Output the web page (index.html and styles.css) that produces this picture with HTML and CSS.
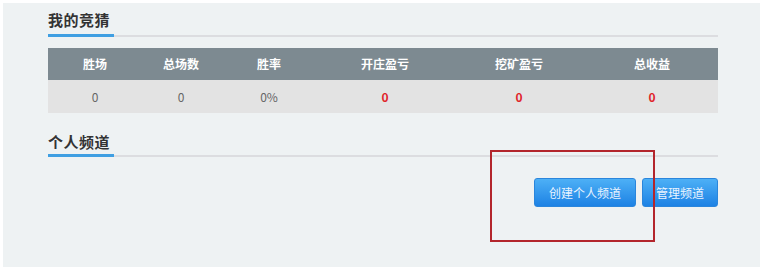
FILE: index.html
```html
<!DOCTYPE html>
<html lang="zh-CN">
<head>
<meta charset="utf-8">
<title>我的竞猜</title>
<link rel="stylesheet" href="styles.css">
</head>
<body>
<div class="panel">
  <div class="sec-head"><span class="sec-title">我的竞猜</span></div>
  <div class="stats">
    <div class="row head">
      <div>胜场</div><div>总场数</div><div>胜率</div><div>开庄盈亏</div><div>挖矿盈亏</div><div>总收益</div>
    </div>
    <div class="row body">
      <div>0</div><div>0</div><div>0%</div><div class="red">0</div><div class="red">0</div><div class="red">0</div>
    </div>
  </div>
  <div class="sec-head second"><span class="sec-title">个人频道</span></div>
  <div class="actions">
    <button class="btn wide">创建个人频道</button>
    <button class="btn">管理频道</button>
  </div>
  <div class="mark"></div>
</div>
</body>
</html>
```
FILE: styles.css
```css
html, body {
  margin: 0;
  padding: 0;
  background: #ffffff;
}
body {
  font-family: "Noto Sans CJK SC", "Noto Sans", sans-serif;
}
.panel {
  position: relative;
  margin: 3px;
  width: 757px;
  height: 264px;
  box-sizing: border-box;
  background: #eef2f3;
  padding: 4px 42px 0 45px;
}
.sec-head {
  border-bottom: 2px solid #dcdde0;
  height: 28px;
}
.sec-head.second {
  margin-top: 16px;
  height: 26px;
}
.sec-title {
  display: inline-block;
  width: 66px;
  height: 25px;
  border-bottom: 3px solid #3f9fe2;
  font-size: 15px;
  font-weight: bold;
  line-height: 22px;
  color: #333333;
  letter-spacing: 0.5px;
}
.second .sec-title {
  height: 23px;
}
.stats {
  margin-top: 11px;
}
.row {
  display: grid;
  grid-template-columns: 94px 78px 98px 134px 134px 132px;
  text-align: center;
  font-size: 12px;
}
.row.head {
  height: 32px;
  line-height: 32px;
  background: #7d8a91;
  color: #ffffff;
  font-weight: bold;
}
.row.body {
  height: 33px;
  line-height: 33px;
  background: #e3e3e3;
  color: #666666;
}
.row .red {
  color: #e0262c;
  font-weight: bold;
}
.actions {
  display: flex;
  justify-content: flex-end;
  gap: 6px;
  margin-top: 21px;
}
.btn {
  height: 29px;
  padding: 0 13px;
  border: 1px solid #2a86dc;
  border-radius: 3px;
  background: linear-gradient(#4db0f6, #1d82e4);
  color: #eaf4ff;
  font-family: "Noto Sans CJK SC", "Noto Sans", sans-serif;
  font-size: 12px;
  line-height: 27px;
  box-sizing: border-box;
}
.btn.wide {
  padding: 0 14px;
}
.mark {
  position: absolute;
  left: 487px;
  top: 147px;
  width: 165px;
  height: 92px;
  box-sizing: border-box;
  border: 2px solid #b3262c;
}
```
